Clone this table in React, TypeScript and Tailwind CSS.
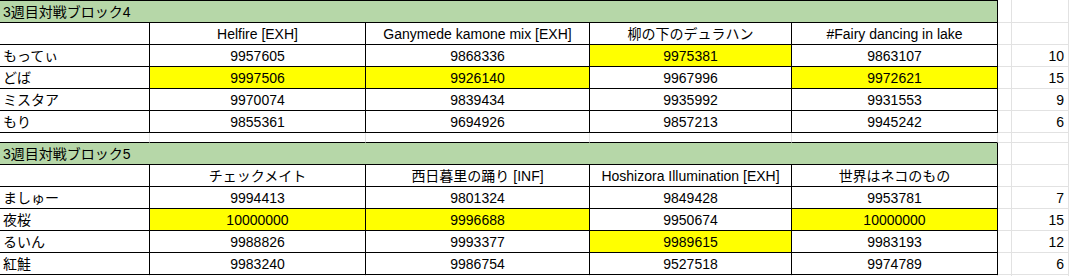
import React from 'react';

const COLS = "grid grid-cols-[150px_216px_224px_202px_206px_14px_57px]";
const FONT = "font-['Liberation_Sans','Noto_Sans_CJK_JP',sans-serif]";

interface Block {
  title: string,
  songs: string[],
  players: { name: string, scores: string[], marks: number[], total: string }[]
}

const blocks: Block[] = [
  {
    title: "3週目対戦ブロック4",
    songs: ["Helfire [EXH]", "Ganymede kamone mix [EXH]", "柳の下のデュラハン", "#Fairy dancing in lake"],
    players: [
      { name: "もってぃ", scores: ["9957605", "9868336", "9975381", "9863107"], marks: [2], total: "10" },
      { name: "どば", scores: ["9997506", "9926140", "9967996", "9972621"], marks: [0, 1, 3], total: "15" },
      { name: "ミスタア", scores: ["9970074", "9839434", "9935992", "9931553"], marks: [], total: "9" },
      { name: "もり", scores: ["9855361", "9694926", "9857213", "9945242"], marks: [], total: "6" },
    ],
  },
  {
    title: "3週目対戦ブロック5",
    songs: ["チェックメイト", "西日暮里の踊り [INF]", "Hoshizora Illumination [EXH]", "世界はネコのもの"],
    players: [
      { name: "ましゅー", scores: ["9994413", "9801324", "9849428", "9953781"], marks: [], total: "7" },
      { name: "夜桜", scores: ["10000000", "9996688", "9950674", "10000000"], marks: [0, 1, 3], total: "15" },
      { name: "るいん", scores: ["9988826", "9993377", "9989615", "9983193"], marks: [2], total: "12" },
      { name: "紅鮭", scores: ["9983240", "9986754", "9527518", "9974789"], marks: [], total: "6" },
    ],
  },
];

const GrayTail = () => (
  <>
    <div className="border-r border-b border-[#e2e2e2]" />
    <div className="border-r border-b border-[#e2e2e2]" />
  </>
);

const TableBlock = ({ block, first }: { block: Block, first: boolean }) => (
  <div>
    {/* Title row */}
    <div className={`${COLS} ${first ? "h-[23px]" : "h-[22px]"}`}>
      <div
        className={`col-span-5 flex items-end pl-[3px] pb-[2px] leading-[16px] bg-[#b6d7a8] border-r border-b border-black ${first ? "border-t" : ""}`}
      >
        {block.title}
      </div>
      <GrayTail />
    </div>

    {/* Song names */}
    <div className={`${COLS} h-[22px]`}>
      <div className="border-r border-b border-black" />
      {block.songs.map((s) => (
        <div key={s} className="flex items-end justify-center pb-[2px] leading-[16px] border-r border-b border-black whitespace-nowrap">
          {s}
        </div>
      ))}
      <GrayTail />
    </div>

    {/* Players */}
    {block.players.map((p) => (
      <div key={p.name} className={`${COLS} h-[22px]`}>
        <div className="flex items-end pl-[3px] pb-[2px] leading-[16px] border-r border-b border-black">{p.name}</div>
        {p.scores.map((sc, i) => (
          <div
            key={i}
            className={`flex items-end justify-center pb-[2px] leading-[16px] border-r border-b border-black ${p.marks.includes(i) ? "bg-[#ffff00]" : ""}`}
          >
            {sc}
          </div>
        ))}
        <div className="border-r border-b border-[#e2e2e2]" />
        <div className="flex items-end justify-end pr-[4px] pb-[2px] leading-[16px] border-r border-b border-[#e2e2e2]">{p.total}</div>
      </div>
    ))}
  </div>
);

export default function App() {
  return (
    <div className={`w-[1069px] h-[276px] overflow-hidden bg-white text-[14px] text-black ${FONT}`}>
      <TableBlock block={blocks[0]} first />

      {/* Spacer row */}
      <div className={`${COLS} h-[10px]`}>
        {[0, 1, 2, 3, 4].map((i) => (
          <div key={i} className="border-r border-b border-r-[#e2e2e2] border-b-black" />
        ))}
        <GrayTail />
      </div>

      <TableBlock block={blocks[1]} first={false} />

      <div className={`${COLS} h-[2px]`}>
        {[0, 1, 2, 3, 4, 5, 6].map((i) => (
          <div key={i} className="border-r border-[#e2e2e2]" />
        ))}
      </div>
    </div>
  );
}
